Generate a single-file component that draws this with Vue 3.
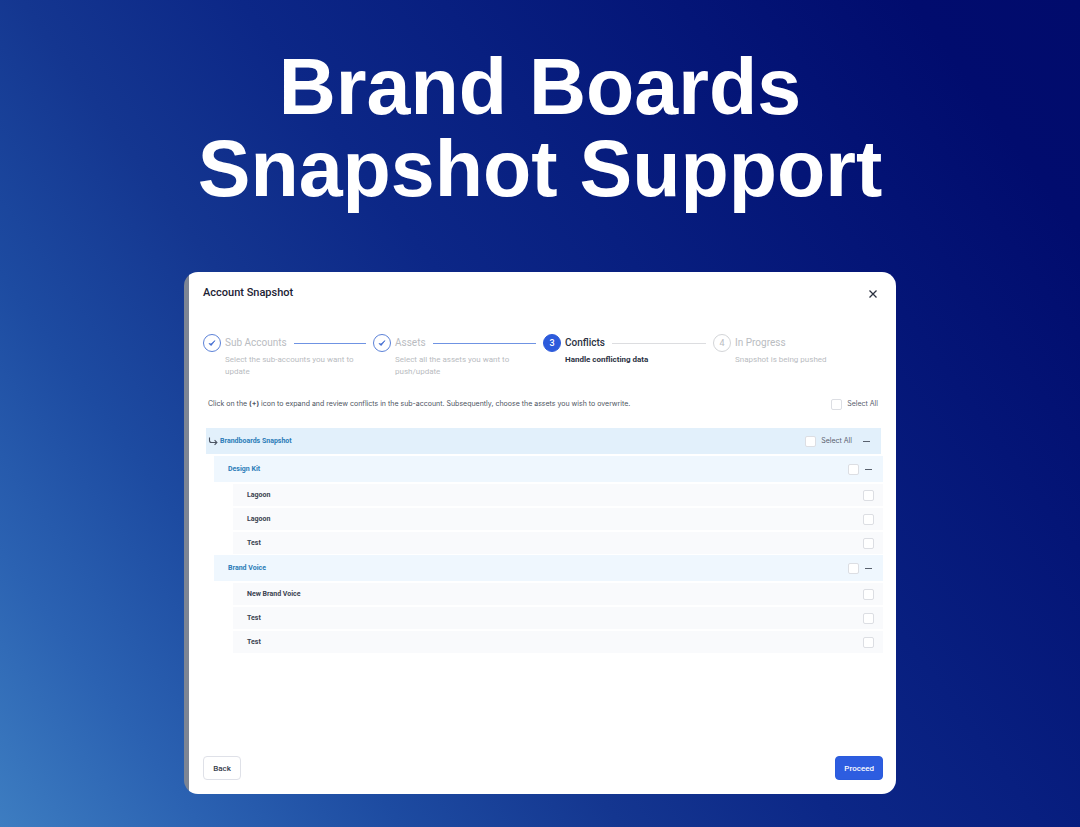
<script setup>
import { reactive } from 'vue'

const steps = [
  { id: 1, title: 'Sub Accounts', text: 'Select the sub-accounts you want to update', state: 'done' },
  { id: 2, title: 'Assets', text: 'Select all the assets you want to push/update', state: 'done' },
  { id: 3, title: 'Conflicts', text: 'Handle conflicting data', state: 'active' },
  { id: 4, title: 'In Progress', text: 'Snapshot is being pushed', state: 'waiting' },
]

const groups = reactive([
  {
    name: 'Design Kit',
    checked: false,
    items: [
      { name: 'Lagoon', checked: false },
      { name: 'Lagoon', checked: false },
      { name: 'Test', checked: false },
    ],
  },
  {
    name: 'Brand Voice',
    checked: false,
    items: [
      { name: 'New Brand Voice', checked: false },
      { name: 'Test', checked: false },
      { name: 'Test', checked: false },
    ],
  },
])
</script>

<template>
  <main class="scene">
    <h1 class="headline">Brand Boards<br />Snapshot Support</h1>

    <section class="dialog" aria-labelledby="dialog-title">
      <header class="dialog-head">
        <h2 id="dialog-title">Account Snapshot</h2>
        <button class="close" type="button" aria-label="Close">
          <svg viewBox="0 0 10 10" width="10" height="10">
            <path d="M1.5 1.5l7 7M8.5 1.5l-7 7" fill="none" stroke="#2b3140" stroke-width="1.3" />
          </svg>
        </button>
      </header>

      <ol class="steps">
        <li v-for="step in steps" :key="step.id" class="step" :class="step.state">
          <span class="dot">
            <svg v-if="step.state === 'done'" viewBox="0 0 10 10" width="10" height="10">
              <path d="M2 5.5L4.1 7.6L8 2.6L4 6Z" fill="#3a66d0" stroke="#3a66d0" stroke-width=".7" stroke-linejoin="round" />
            </svg>
            <template v-else>{{ step.id }}</template>
          </span>
          <div class="step-body">
            <div class="step-title">{{ step.title }}</div>
            <p>{{ step.text }}</p>
          </div>
        </li>
      </ol>

      <div class="info">
        <p>
          Click on the <b>(+)</b> icon to expand and review conflicts in the sub-account.
          Subsequently, choose the assets you wish to overwrite.
        </p>
        <label class="all"><input type="checkbox" />Select All</label>
      </div>

      <div class="tree">
        <div class="row root">
          <svg class="branch" viewBox="0 0 10 10" width="10" height="10">
            <path d="M1.5 1.5v3q0 2 2 2h5M6.6 4.2L8.9 6.5L6.6 8.8" fill="none" stroke="#4c5462" stroke-width="1.1" />
          </svg>
          <span class="name">Brandboards Snapshot</span>
          <label class="all"><input type="checkbox" />Select All</label>
          <button class="toggle" type="button" aria-label="Collapse Brandboards Snapshot"></button>
        </div>
        <div class="groups">
          <div v-for="group in groups" :key="group.name" class="group">
            <div class="row parent">
              <span class="name">{{ group.name }}</span>
              <input v-model="group.checked" type="checkbox" :aria-label="group.name" />
              <button class="toggle" type="button" :aria-label="'Collapse ' + group.name"></button>
            </div>
            <label v-for="(item, index) in group.items" :key="index" class="row child">
              <span class="name">{{ item.name }}</span>
              <input v-model="item.checked" type="checkbox" />
            </label>
          </div>
        </div>
      </div>

      <footer class="actions">
        <button class="btn" type="button">Back</button>
        <button class="btn primary" type="button">Proceed</button>
      </footer>
    </section>
  </main>
</template>

<style>
body {
  margin: 0;
}
</style>

<style scoped>
* {
  box-sizing: border-box;
}
.scene {
  display: flex;
  flex-direction: column;
  min-height: 100vh;
  padding: 46px 184px 33px;
  background: linear-gradient(54deg, #3d7dc1 0%, #2b62b2 12%, #1d4ba1 24%, #143690 37%, #0c2787 50%, #081f80 62%, #041577 76%, #010c6e 90%, #010b6c 100%);
  font-family: Roboto, "Liberation Sans", sans-serif;
}
.headline {
  margin: 0 -40px 62px;
  color: #fff;
  font: bold 79px/82px "Liberation Sans", Arial, sans-serif;
  text-align: center;
}
.dialog {
  flex: 1;
  display: flex;
  flex-direction: column;
  padding: 14px 13px 14px 19px;
  border-radius: 14px;
  background: linear-gradient(90deg, #7d8594 5px, #fff 5px);
}
.dialog-head {
  display: flex;
  justify-content: space-between;
  align-items: flex-start;
  height: 48px;
}
.dialog-head h2 {
  margin: 0;
  color: #1c2233;
  font-size: 11px;
  line-height: 13px;
  font-weight: 500;
}
button {
  font-family: inherit;
  padding: 0;
  border: 0;
  background: none;
}
.close {
  display: flex;
  margin: 3px 5px 0 0;
}
.steps {
  display: grid;
  grid-template-columns: repeat(4, 1fr);
  min-height: 64px;
  margin: 0;
  padding: 0;
  list-style: none;
}
.step {
  display: flex;
  gap: 4px;
  color: #b9bcc1;
}
.dot {
  flex: none;
  display: flex;
  align-items: center;
  justify-content: center;
  width: 18px;
  height: 18px;
  border: 1px solid #d3d5d8;
  border-radius: 50%;
  font-size: 9px;
}
.done .dot {
  border-color: #5c82d8;
}
.active .dot {
  border-color: #2d5bdb;
  background: #2d5bdb;
  color: #fff;
  font-weight: 500;
}
.step-body {
  flex: 1;
}
.step-title {
  display: flex;
  align-items: center;
  gap: 7px;
  font-size: 10px;
  line-height: 18px;
}
.step:not(:last-child) .step-title::after {
  content: "";
  flex: 1;
  height: 1px;
  margin-right: 7px;
  background: #dcdde0;
}
.step.done .step-title::after {
  background: #6f93e3;
}
.step p {
  max-width: 140px;
  margin: 2px 0 0;
  font-size: 8px;
  line-height: 12px;
}
.active {
  color: #2b3242;
}
.active .step-title {
  font-weight: 500;
}
.active p {
  font-weight: 700;
}
.info {
  display: flex;
  align-items: center;
  justify-content: space-between;
  margin: 0 5px 18px;
  color: #4d5461;
}
.info p {
  margin: 0;
  font-family: Inter, "Liberation Sans", sans-serif;
  font-size: 7px;
  line-height: 12px;
}
.all {
  display: flex;
  align-items: center;
  gap: 5px;
  color: #5b616e;
  font-family: Inter, "Liberation Sans", sans-serif;
  font-size: 7px;
  line-height: 12px;
}
input[type="checkbox"] {
  appearance: none;
  flex: none;
  width: 11px;
  height: 11px;
  margin: 0;
  border: 1px solid #dcdee3;
  border-radius: 2px;
  background: #fff;
}
.tree {
  margin-left: 3px;
}
.row {
  display: flex;
  align-items: center;
  color: #3a4250;
  font-size: 7px;
  font-weight: 700;
}
.name {
  flex: 1;
}
.root {
  height: 26px;
  margin: 0 2px 2px 0;
  padding: 0 11px 0 2px;
  background: #e2f0fb;
}
.branch {
  margin-right: 2px;
}
.root .name,
.parent .name {
  color: #2b7cb8;
}
.root .all {
  margin-right: 11px;
  font-weight: 400;
}
.toggle {
  width: 7px;
  height: 10px;
  background: linear-gradient(#59616e, #59616e) center / 7px 1px no-repeat;
}
.groups {
  display: grid;
  gap: 1px;
  padding-left: 8px;
}
.group {
  display: grid;
  gap: 2px;
}
.parent {
  height: 26px;
  padding: 0 11px 0 14px;
  background: #eff7fe;
}
.parent input {
  margin-right: 6px;
}
.child {
  height: 22px;
  margin-left: 19px;
  padding: 0 9px 0 14px;
  background: #f9fafc;
}
.actions {
  display: flex;
  justify-content: space-between;
  margin-top: auto;
}
.btn {
  min-width: 38px;
  height: 24px;
  padding: 0 8px;
  border: 1px solid #dfe1e8;
  border-radius: 4px;
  background: #fff;
  color: #343b4b;
  font-size: 8px;
  font-weight: 500;
}
.btn.primary {
  border-color: #2a5bdc;
  background: #2d5de0;
  color: #fff;
}
</style>
